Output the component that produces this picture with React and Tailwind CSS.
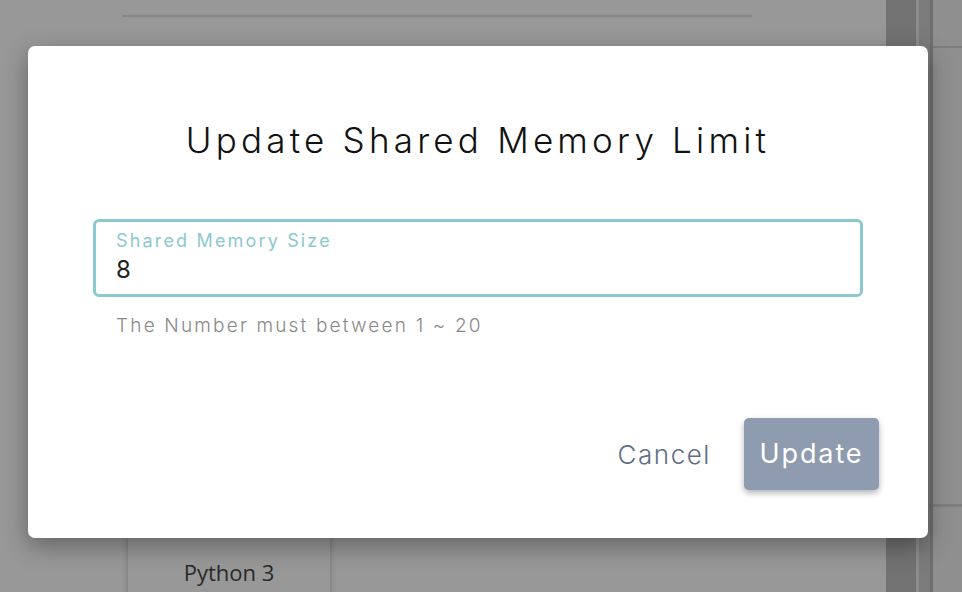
export default function App() {
  const font = { fontFamily: 'Inter, "Noto Sans", sans-serif' };
  return (
    <div className="relative w-[962px] h-[592px] overflow-hidden bg-[#989898]" style={font}>
      {/* background page */}
      <div className="flex h-full">
        <div className="flex-1 flex flex-col">
          <div className="ml-[122px] mt-[15px] w-[630px] h-[2px] bg-[#878787]" />
          <div className="flex-1" />
          <div className="ml-[128px] w-[202px] h-[100px] bg-[#989898] shadow-[0_0_6px_rgba(0,0,0,0.25)] flex flex-col items-center pt-[58px] -mb-[8px]">
            <span className="text-[22px] leading-[28px] text-[#2a2a2a]" style={{ fontFamily: '"Open Sans", sans-serif' }}>Python 3</span>
          </div>
        </div>
        <div className="w-[30px] h-full bg-[#727272]" />
        <div className="w-[3px] h-full bg-[#8c8c8c]" />
        <div className="w-[11px] h-full bg-[#7b7b7b]" />
        <div className="w-[3px] h-full bg-[#6f6f6f]" />
        <div className="w-[29px] h-full bg-[#8f8f8f] flex flex-col">
          <div className="h-[46px]" />
          <div className="h-[2px] bg-[#7e7e7e]" />
          <div className="h-[456px]" />
          <div className="h-[3px] bg-[#7e7e7e]" />
        </div>
      </div>

      {/* dialog */}
      <div className="absolute left-[28px] top-[46px] w-[900px] h-[492px] bg-white rounded-[7px] shadow-[0_8px_24px_rgba(0,0,0,0.35)] flex flex-col px-[65px]">
        <h1 className="mt-[74px] text-center text-[35px] leading-[40px] font-light text-[#111] tracking-[0.12em]">
          Update Shared Memory Limit
        </h1>
        <div className="mt-[59px] h-[78px] border-[3px] border-[#8cc8d0] rounded-[6px] px-[20px] flex flex-col">
          <span className="mt-[9px] text-[18px] leading-[20px] text-[#8cc8d0] tracking-[0.12em]">Shared Memory Size</span>
          <span className="mt-[5px] text-[24px] leading-[28px] text-[#222] tracking-[0.05em]">8</span>
        </div>
        <p className="mt-[18px] pl-[23px] text-[19px] leading-[22px] text-[#888] font-light tracking-[0.115em]">
          The Number must between 1 ~ 20
        </p>
        <div className="flex-1" />
        <div className="flex items-center justify-end gap-[33px] mb-[48px] -mr-[16px]">
          <button className="text-[26px] text-[#5d6d87] font-light tracking-[0.06em]">Cancel</button>
          <button className="w-[135px] h-[72px] rounded-[5px] bg-[#8f9bae] text-white text-[27px] tracking-[0.07em] shadow-[0_3px_6px_rgba(0,0,0,0.3)]">
            Update
          </button>
        </div>
      </div>
    </div>
  );
}
